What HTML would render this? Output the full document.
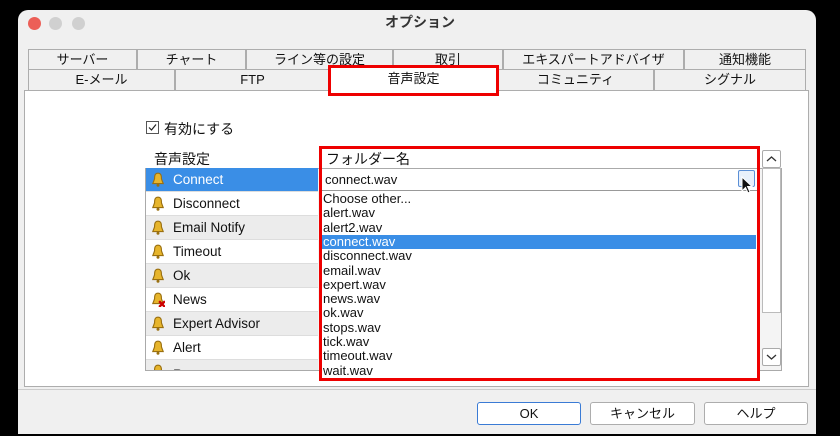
<!DOCTYPE html>
<html><head><meta charset="utf-8"><style>
*{margin:0;padding:0;box-sizing:border-box}
body{width:840px;height:436px;background:#000;position:relative;overflow:hidden;font-family:"Liberation Sans","Noto Sans CJK JP",sans-serif;font-size:13px;color:#111}
.a{position:absolute}
.win{left:18px;top:10px;width:798px;height:424px;background:#f0f0f0;border-radius:10px 10px 0 0}
.tab{position:absolute;height:20px;border:1px solid #adadad;border-bottom:none;background:#f0f0f0;text-align:center;font-size:13px;line-height:19px}
.row{position:absolute;left:146px;width:172px;height:24px;line-height:23px;border-bottom:1px solid #ddd;padding-left:27px;font-size:13.5px}
.bell{position:absolute;left:5px;top:4px;width:14px;height:15px}
.it{position:absolute;left:322px;width:434px;height:14.3px;line-height:14px;font-size:13px;padding-left:1px}
.btn{position:absolute;top:402px;height:23px;background:#fff;border:1px solid #adadad;border-radius:3px;text-align:center;line-height:21px}
</style></head><body>
<div class="a win"></div>
<div class="a" style="left:28px;top:17px;width:13px;height:13px;border-radius:50%;background:#ec5f57"></div>
<div class="a" style="left:49px;top:17px;width:13px;height:13px;border-radius:50%;background:#d0d0d0"></div>
<div class="a" style="left:72px;top:17px;width:13px;height:13px;border-radius:50%;background:#d0d0d0"></div>
<div class="a" style="left:0;width:840px;top:12px;text-align:center;font-size:14px;font-weight:bold;color:#333">オプション</div>
<div class="tab" style="left:28px;top:49px;width:109px">サーバー</div>
<div class="tab" style="left:137px;top:49px;width:109px">チャート</div>
<div class="tab" style="left:246px;top:49px;width:147px">ライン等の設定</div>
<div class="tab" style="left:393px;top:49px;width:110px">取引</div>
<div class="tab" style="left:503px;top:49px;width:181px">エキスパートアドバイザ</div>
<div class="tab" style="left:684px;top:49px;width:122px">通知機能</div>
<div class="tab" style="left:28px;top:69px;width:147px;height:21px">E-メール</div>
<div class="tab" style="left:175px;top:69px;width:155px;height:21px">FTP</div>
<div class="tab" style="left:497px;top:69px;width:157px;height:21px">コミュニティ</div>
<div class="tab" style="left:654px;top:69px;width:152px;height:21px">シグナル</div>
<div class="a" style="left:24px;top:90px;width:785px;height:297px;border:1px solid #adadad;background:#fff"></div>
<div class="tab" style="left:330px;top:67px;width:167px;height:26px;background:#fff;z-index:2;line-height:21px">音声設定</div>
<div class="a" style="left:328px;top:65px;width:171px;height:31px;border:3px solid #e00;z-index:3"></div>
<div class="a" style="left:146px;top:121px;width:13px;height:13px;border:1px solid #555;background:#fff"><svg width="11" height="11" viewBox="0 0 11 11" style="position:absolute;left:0;top:0"><path d="M2 5.5L4.5 8L9 2.5" fill="none" stroke="#222" stroke-width="1.2"/></svg></div>
<div class="a" style="left:164px;top:119px;font-size:14px">有効にする</div>
<div class="a" style="left:154px;top:149px;font-size:14px">音声設定</div>
<div class="a" style="left:326px;top:149px;font-size:14px">フォルダー名</div>
<div class="a" style="left:145px;top:168px;width:637px;height:203px;border:1px solid #aaa;background:#f4f4f4"></div>
<div class="row" style="top:168px;background:#3a8ee6;color:#fff"><svg class="bell" viewBox="0 0 12 13"><path d="M6 1C3 1 3 4 3 6L1.5 10H10.5L9 6C9 4 9 1 6 1Z" fill="#e7b52c" stroke="#9a7010"/><circle cx="6" cy="11.5" r="1.3" fill="#9a7010"/></svg>Connect</div>
<div class="row" style="top:192px;background:#fff"><svg class="bell" viewBox="0 0 12 13"><path d="M6 1C3 1 3 4 3 6L1.5 10H10.5L9 6C9 4 9 1 6 1Z" fill="#e7b52c" stroke="#9a7010"/><circle cx="6" cy="11.5" r="1.3" fill="#9a7010"/></svg>Disconnect</div>
<div class="row" style="top:216px;background:#ececec"><svg class="bell" viewBox="0 0 12 13"><path d="M6 1C3 1 3 4 3 6L1.5 10H10.5L9 6C9 4 9 1 6 1Z" fill="#e7b52c" stroke="#9a7010"/><circle cx="6" cy="11.5" r="1.3" fill="#9a7010"/></svg>Email Notify</div>
<div class="row" style="top:240px;background:#fff"><svg class="bell" viewBox="0 0 12 13"><path d="M6 1C3 1 3 4 3 6L1.5 10H10.5L9 6C9 4 9 1 6 1Z" fill="#e7b52c" stroke="#9a7010"/><circle cx="6" cy="11.5" r="1.3" fill="#9a7010"/></svg>Timeout</div>
<div class="row" style="top:264px;background:#ececec"><svg class="bell" viewBox="0 0 12 13"><path d="M6 1C3 1 3 4 3 6L1.5 10H10.5L9 6C9 4 9 1 6 1Z" fill="#e7b52c" stroke="#9a7010"/><circle cx="6" cy="11.5" r="1.3" fill="#9a7010"/></svg>Ok</div>
<div class="row" style="top:288px;background:#fff"><svg class="bell" viewBox="0 0 12 13"><path d="M6 1C3 1 3 4 3 6L1.5 10H10.5L9 6C9 4 9 1 6 1Z" fill="#e7b52c" stroke="#9a7010"/><path d="M7 8L12 13M12 8L7 13" stroke="#c00" stroke-width="2"/></svg>News</div>
<div class="row" style="top:312px;background:#ececec"><svg class="bell" viewBox="0 0 12 13"><path d="M6 1C3 1 3 4 3 6L1.5 10H10.5L9 6C9 4 9 1 6 1Z" fill="#e7b52c" stroke="#9a7010"/><circle cx="6" cy="11.5" r="1.3" fill="#9a7010"/></svg>Expert Advisor</div>
<div class="row" style="top:336px;background:#fff"><svg class="bell" viewBox="0 0 12 13"><path d="M6 1C3 1 3 4 3 6L1.5 10H10.5L9 6C9 4 9 1 6 1Z" fill="#e7b52c" stroke="#9a7010"/><circle cx="6" cy="11.5" r="1.3" fill="#9a7010"/></svg>Alert</div>
<div class="row" style="top:360px;height:10px;background:#ececec;overflow:hidden;border:none"><svg class="bell" viewBox="0 0 12 13"><path d="M6 1C3 1 3 4 3 6L1.5 10H10.5L9 6C9 4 9 1 6 1Z" fill="#e7b52c" stroke="#9a7010"/></svg><span style="position:relative;top:3px">Repeat</span></div>
<div class="a" style="left:762px;top:150px;width:19px;height:18px;border:1px solid #aaa;border-radius:2px;background:#fff"><svg width="17" height="16" viewBox="0 0 17 16"><path d="M4 10L8.5 6L13 10" fill="none" stroke="#333" stroke-width="1.3"/></svg></div>
<div class="a" style="left:762px;top:348px;width:19px;height:18px;border:1px solid #aaa;border-radius:2px;background:#fff"><svg width="17" height="16" viewBox="0 0 17 16"><path d="M4 6L8.5 10L13 6" fill="none" stroke="#333" stroke-width="1.3"/></svg></div>
<div class="a" style="left:762px;top:168px;width:19px;height:145px;border:1px solid #bbb;background:#fff"></div>
<div class="a" style="left:320px;top:168px;width:438px;height:210px;background:#fff"></div>
<div class="a" style="left:320px;top:168px;width:437px;height:23px;border-bottom:1px solid #999;border-top:1px solid #aaa;padding-left:5px;line-height:21px">connect.wav</div>
<div class="a" style="left:738px;top:170px;width:17px;height:17px;border:1px solid #5b8fd6;border-radius:2px;background:#e8f0fb"></div>
<svg class="a" style="left:741px;top:176px" width="14" height="20" viewBox="0 0 14 20"><path d="M1 1V15L4.5 11.5L7 17L9 16L6.5 10.5H11Z" fill="#111" stroke="#fff" stroke-width="1"/></svg>
<div class="it" style="top:192px">Choose other...</div>
<div class="it" style="top:206.3px">alert.wav</div>
<div class="it" style="top:220.6px">alert2.wav</div>
<div class="it" style="top:234.9px;background:#3a8ee6;color:#fff">connect.wav</div>
<div class="it" style="top:249.2px">disconnect.wav</div>
<div class="it" style="top:263.5px">email.wav</div>
<div class="it" style="top:277.8px">expert.wav</div>
<div class="it" style="top:292.1px">news.wav</div>
<div class="it" style="top:306.4px">ok.wav</div>
<div class="it" style="top:320.7px">stops.wav</div>
<div class="it" style="top:335px">tick.wav</div>
<div class="it" style="top:349.3px">timeout.wav</div>
<div class="it" style="top:363.6px">wait.wav</div>
<div class="a" style="left:319px;top:146px;width:441px;height:235px;border:3px solid #e00"></div>
<div class="a" style="left:18px;top:389px;width:798px;height:1px;background:#ccc"></div>
<div class="btn" style="left:477px;width:104px;border-color:#3a7bd5">OK</div>
<div class="btn" style="left:590px;width:105px">キャンセル</div>
<div class="btn" style="left:704px;width:104px">ヘルプ</div>
</body></html>
